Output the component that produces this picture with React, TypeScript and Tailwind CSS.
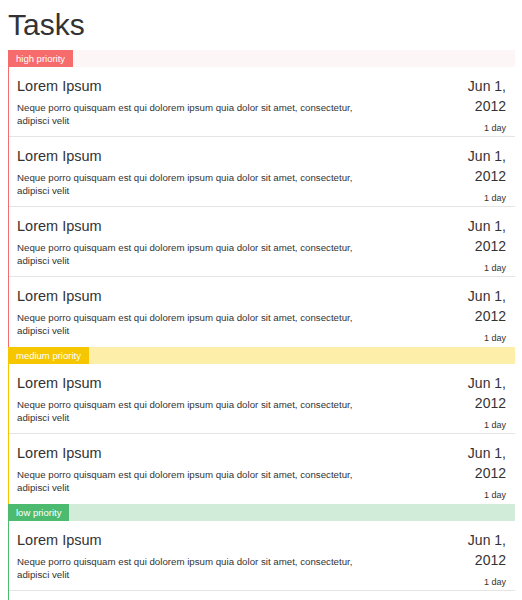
import React from 'react';

type Group = {
  label: string;
  badge: string;
  bar: string;
  border: string;
  count: number;
};

const groups: Group[] = [
  { label: 'high priority', badge: 'bg-[#f66b6b]', bar: 'bg-[#fdf6f6]', border: 'border-[#f26d6d]', count: 4 },
  { label: 'medium priority', badge: 'bg-[#f6c700]', bar: 'bg-[#fdeeaa]', border: 'border-[#f5c600]', count: 2 },
  { label: 'low priority', badge: 'bg-[#4dbb6f]', bar: 'bg-[#d1ecd9]', border: 'border-[#4dbb6f]', count: 2 },
];

const TaskRow: React.FC = () => (
  <div className="flex justify-between border-b border-[#e5e5e5] pt-[9px] pb-[1px] pl-2 pr-[9px] last:border-b-transparent">
    <div className="w-[345px]">
      <div className="text-[14.5px] leading-5 text-[#333]">Lorem Ipsum</div>
      <p className="mt-[5px] text-[9.7px] leading-[13px] text-[#333]">
        Neque porro quisquam est qui dolorem ipsum quia dolor sit amet, consectetur, adipisci velit
      </p>
    </div>
    <div className="w-[60px] text-right">
      <div className="text-[14px] leading-5 text-[#333]">Jun 1, 2012</div>
      <div className="mt-[6px] text-[9px] leading-[13px] text-[#333]">1 day</div>
    </div>
  </div>
);

export default function App() {
  return (
    <div className="min-h-[600px] bg-white pl-2 pr-[7px] pt-2 font-['Liberation_Sans',Arial,sans-serif]">
      <h2 className="mb-[9px] text-[30px] leading-[33px] text-[#333]">Tasks</h2>

      {groups.map(g => (
        <section key={g.label}>
          {/* Priority header */}
          <div className={`flex h-[17px] ${g.bar}`}>
            <span className={`px-2 text-[9.5px] leading-[17px] text-white ${g.badge}`}>{g.label}</span>
          </div>
          <div className={`border-l ${g.border}`}>
            {Array.from({ length: g.count }).map((_, i) => (
              <TaskRow key={i} />
            ))}
          </div>
        </section>
      ))}
    </div>
  );
}
